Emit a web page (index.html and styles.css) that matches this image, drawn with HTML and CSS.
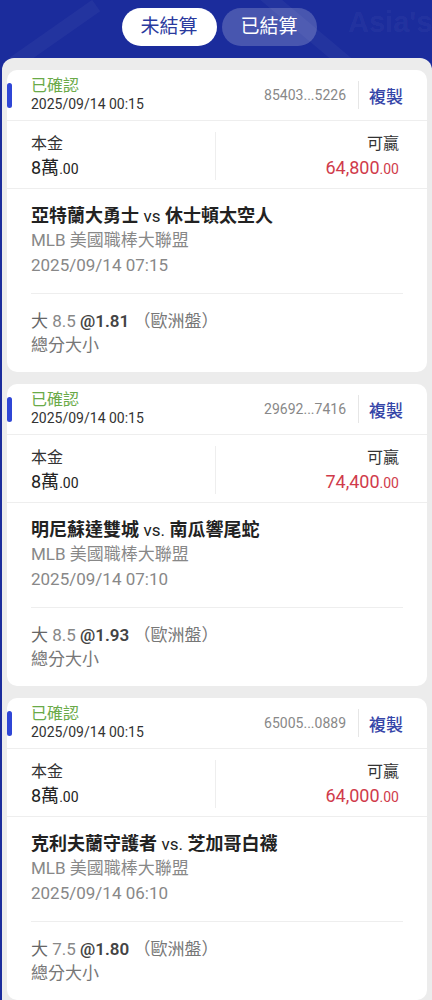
FILE: index.html
```html
<!DOCTYPE html>
<html lang="zh-Hant">
<head>
    <meta charset="UTF-8">
    <meta name="viewport" content="width=device-width, initial-scale=1.0">
    <title>注單</title>
    <link rel="stylesheet" href="styles.css">
</head>
<body>
    <div class="top">
        <div class="deco">
            <span class="deco-line line1"></span>
            <span class="deco-line line2"></span>
            <span class="deco-text">Asia's</span>
        </div>
        <div class="tabs">
            <span class="tab active">未結算</span>
            <span class="tab">已結算</span>
        </div>
    </div>

    <div class="panel">
        <!-- 注單 1 -->
        <div class="card">
            <div class="card-head">
                <span class="mark"></span>
                <div class="status">
                    <div class="ok">已確認</div>
                    <div class="time">2025/09/14 00:15</div>
                </div>
                <div class="order">
                    <span class="order-no">85403...5226</span>
                    <span class="sep"></span>
                    <span class="copy">複製</span>
                </div>
            </div>
            <div class="amounts">
                <div class="col">
                    <div class="label">本金</div>
                    <div class="value">8萬<small>.00</small></div>
                </div>
                <div class="col right">
                    <div class="label">可贏</div>
                    <div class="value win">64,800<small>.00</small></div>
                </div>
            </div>
            <div class="match">
                <div class="teams">亞特蘭大勇士 <span class="vs">vs</span> 休士頓太空人</div>
                <div class="sub">MLB 美國職棒大聯盟</div>
                <div class="sub">2025/09/14 07:15</div>
            </div>
            <div class="bet">
                <div class="pick">大 <span class="line">8.5</span> <b>@1.81</b> <span class="type">（歐洲盤）</span></div>
                <div class="market">總分大小</div>
            </div>
        </div>

        <!-- 注單 2 -->
        <div class="card">
            <div class="card-head">
                <span class="mark"></span>
                <div class="status">
                    <div class="ok">已確認</div>
                    <div class="time">2025/09/14 00:15</div>
                </div>
                <div class="order">
                    <span class="order-no">29692...7416</span>
                    <span class="sep"></span>
                    <span class="copy">複製</span>
                </div>
            </div>
            <div class="amounts">
                <div class="col">
                    <div class="label">本金</div>
                    <div class="value">8萬<small>.00</small></div>
                </div>
                <div class="col right">
                    <div class="label">可贏</div>
                    <div class="value win">74,400<small>.00</small></div>
                </div>
            </div>
            <div class="match">
                <div class="teams">明尼蘇達雙城 <span class="vs">vs.</span> 南瓜響尾蛇</div>
                <div class="sub">MLB 美國職棒大聯盟</div>
                <div class="sub">2025/09/14 07:10</div>
            </div>
            <div class="bet">
                <div class="pick">大 <span class="line">8.5</span> <b>@1.93</b> <span class="type">（歐洲盤）</span></div>
                <div class="market">總分大小</div>
            </div>
        </div>

        <!-- 注單 3 -->
        <div class="card">
            <div class="card-head">
                <span class="mark"></span>
                <div class="status">
                    <div class="ok">已確認</div>
                    <div class="time">2025/09/14 00:15</div>
                </div>
                <div class="order">
                    <span class="order-no">65005...0889</span>
                    <span class="sep"></span>
                    <span class="copy">複製</span>
                </div>
            </div>
            <div class="amounts">
                <div class="col">
                    <div class="label">本金</div>
                    <div class="value">8萬<small>.00</small></div>
                </div>
                <div class="col right">
                    <div class="label">可贏</div>
                    <div class="value win">64,000<small>.00</small></div>
                </div>
            </div>
            <div class="match">
                <div class="teams">克利夫蘭守護者 <span class="vs">vs.</span> 芝加哥白襪</div>
                <div class="sub">MLB 美國職棒大聯盟</div>
                <div class="sub">2025/09/14 06:10</div>
            </div>
            <div class="bet">
                <div class="pick">大 <span class="line">7.5</span> <b>@1.80</b> <span class="type">（歐洲盤）</span></div>
                <div class="market">總分大小</div>
            </div>
        </div>
    </div>
</body>
</html>
```

FILE: styles.css
```css
*{
    margin: 0;
    padding: 0;
    box-sizing: border-box;
}
body{
    background-color: #1b2c9c;
    font-family: Roboto, "Noto Sans CJK TC", "Noto Sans", sans-serif;
    color: #222;
}

/* 上方頁籤 */
.top{
    position: relative;
    height: 58px;
    overflow: hidden;
}
.deco{
    position: absolute;
    inset: 0;
}
.deco-line{
    position: absolute;
    width: 14px;
    height: 120px;
    background-color: rgba(255, 255, 255, 0.04);
    transform: rotate(55deg);
}
.line1{
    left: 40px;
    top: -20px;
}
.line2{
    left: 300px;
    top: -30px;
    transform: rotate(-50deg);
}
.deco-text{
    position: absolute;
    left: 348px;
    top: 4px;
    font-family: "Liberation Sans", sans-serif;
    font-weight: bold;
    font-size: 29px;
    line-height: 36px;
    color: rgba(255, 255, 255, 0.05);
}
.tabs{
    position: relative;
    display: flex;
    justify-content: center;
    gap: 5px;
    padding: 8px 0 0 6px;
}
.tab{
    width: 95px;
    height: 38px;
    border-radius: 19px;
    font-size: 19px;
    line-height: 38px;
    text-align: center;
    color: #fff;
    background-color: rgba(255, 255, 255, 0.2);
}
.tab.active{
    color: #2a3a9e;
    background-color: #fff;
}

/* 注單列表 */
.panel{
    margin-left: 2px;
    padding: 12px 5px;
    background-color: #ececec;
    border-radius: 12px 12px 0 0;
    min-height: 942px;
}
.card{
    position: relative;
    background-color: #fff;
    border-radius: 10px;
    margin-bottom: 12px;
}
.card-head{
    display: flex;
    align-items: center;
    padding: 7px 24px;
    border-bottom: 1px solid #eee;
}
.mark{
    position: absolute;
    left: 0;
    top: 13px;
    width: 5px;
    height: 25px;
    border-radius: 3px;
    background-color: #2f46d6;
}
.status{
    flex: 1;
}
.ok{
    height: 18px;
    font-size: 16px;
    line-height: 18px;
    color: #6aaa48;
}
.time{
    height: 18px;
    font-size: 14px;
    line-height: 18px;
    color: #333;
}
.order{
    display: flex;
    align-items: center;
}
.order-no{
    font-size: 14px;
    color: #888;
}
.sep{
    width: 1px;
    height: 28px;
    margin: 0 10px 0 12px;
    background-color: #e6e6e6;
}
.copy{
    font-size: 17px;
    font-weight: 500;
    color: #3545a8;
}

.amounts{
    display: flex;
    padding: 11px 0 8px;
    border-bottom: 1px solid #eee;
}
.col{
    flex: 1;
    padding: 0 24px;
}
.col.right{
    text-align: right;
    padding-right: 28px;
    border-left: 1px solid #eee;
}
.label{
    height: 24px;
    font-size: 16px;
    line-height: 24px;
    color: #333;
}
.value{
    height: 24px;
    font-size: 18px;
    line-height: 24px;
    color: #222;
}
.value small{
    font-size: 14px;
}
.value.win{
    color: #d03b4b;
}

.match{
    padding: 14px 0 15px;
    margin: 0 24px;
    border-bottom: 1px solid #eee;
}
.teams{
    height: 25px;
    font-size: 18px;
    font-weight: bold;
    line-height: 25px;
    color: #222;
}
.vs{
    font-weight: normal;
    font-size: 17px;
}
.sub{
    height: 25px;
    font-size: 17px;
    line-height: 25px;
    color: #888;
}

.bet{
    padding: 15px 24px;
}
.pick{
    height: 24px;
    font-size: 17px;
    line-height: 24px;
    color: #666;
}
.pick .line{
    color: #888;
}
.pick b{
    color: #444;
    font-weight: 600;
}
.pick .type{
    color: #777;
}
.market{
    height: 24px;
    font-size: 17px;
    line-height: 24px;
    color: #777;
}
```
